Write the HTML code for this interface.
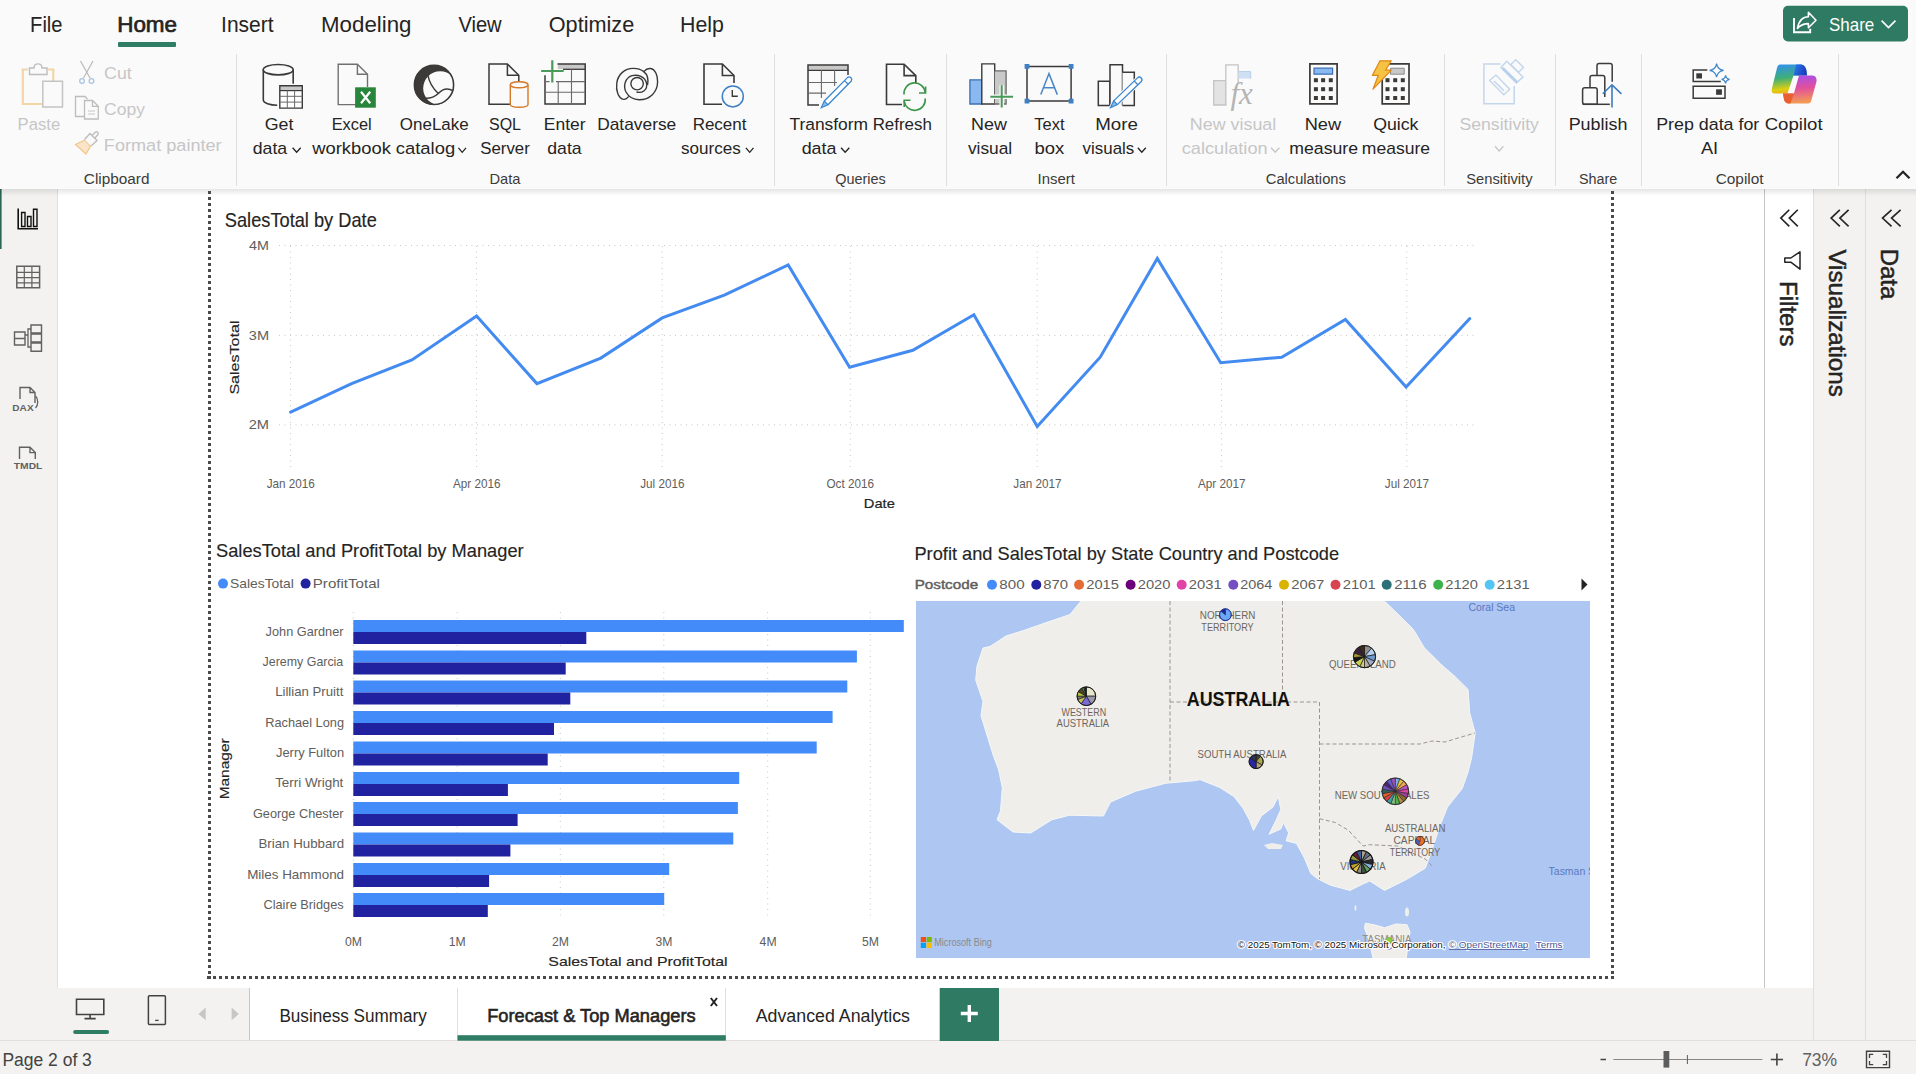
<!DOCTYPE html>
<html><head><meta charset="utf-8"><style>
html,body{margin:0;padding:0;width:1916px;height:1074px;overflow:hidden;background:#fff;}
svg{position:absolute;left:0;top:0;display:block;font-family:"Liberation Sans",sans-serif;}
</style></head><body>
<svg width="1916" height="1074" viewBox="0 0 1916 1074">
<rect x="0" y="0" width="1916" height="189" fill="#fafafa" />
<rect x="57" y="189" width="1708" height="799" fill="#ffffff" />
<rect x="0" y="189" width="57" height="852" fill="#f3f2f1" />
<line x1="57.5" y1="189" x2="57.5" y2="1041" stroke="#e1dfdd" stroke-width="1" />
<rect x="0" y="189" width="1.6" height="60" fill="#2a6655" />
<rect x="1765" y="189" width="48" height="799" fill="#ffffff" />
<line x1="1764.5" y1="189" x2="1764.5" y2="988" stroke="#c8c6c4" stroke-width="1" />
<rect x="1813" y="189" width="103" height="852" fill="#f3f2f1" />
<line x1="1813.5" y1="189" x2="1813.5" y2="1041" stroke="#e1dfdd" stroke-width="1" />
<line x1="1865.5" y1="189" x2="1865.5" y2="1041" stroke="#e1dfdd" stroke-width="1" />
<rect x="57" y="988" width="1756" height="53" fill="#f3f2f1" />
<rect x="250" y="988" width="690" height="53" fill="#ffffff" />
<line x1="249.5" y1="988" x2="249.5" y2="1041" stroke="#c8c6c4" stroke-width="1" />
<line x1="457.5" y1="988" x2="457.5" y2="1041" stroke="#e1dfdd" stroke-width="1" />
<line x1="725.5" y1="988" x2="725.5" y2="1041" stroke="#e1dfdd" stroke-width="1" />
<rect x="0" y="1041" width="1916" height="33" fill="#f3f2f1" />
<line x1="0" y1="1040.5" x2="1916" y2="1040.5" stroke="#e1dfdd" stroke-width="1" />
<defs><linearGradient id="shd" x1="0" y1="0" x2="0" y2="1"><stop offset="0" stop-color="#000" stop-opacity="0.10"/><stop offset="1" stop-color="#000" stop-opacity="0"/></linearGradient></defs>
<rect x="0" y="189" width="1916" height="7" fill="url(#shd)" />
<text transform="translate(30.09,32.20) scale(0.9080,1)" font-size="22.17" fill="#252423" >File</text>
<text transform="translate(117.20,32.20) scale(1.0120,1)" font-size="22.17" fill="#252423" stroke="#252423" stroke-width="0.7" >Home</text>
<rect x="118" y="42" width="58" height="5" fill="#2e7d64" rx="1"/>
<text transform="translate(221.11,32.20) scale(0.9470,1)" font-size="22.17" fill="#252423" >Insert</text>
<text transform="translate(321.02,32.20) scale(1.0328,1)" font-size="21.59" fill="#252423" >Modeling</text>
<text transform="translate(458.40,32.20) scale(0.9327,1)" font-size="21.59" fill="#252423" >View</text>
<text transform="translate(548.72,32.20) scale(1.0043,1)" font-size="21.59" fill="#252423" >Optimize</text>
<text transform="translate(679.99,32.20) scale(0.9884,1)" font-size="21.59" fill="#252423" >Help</text>
<text transform="translate(17.57,129.60) scale(0.9579,1)" font-size="17.40" fill="#c6c6c6" >Paste</text>
<text transform="translate(104.11,78.60) scale(1.0192,1)" font-size="17.40" fill="#c6c6c6" >Cut</text>
<text transform="translate(104.12,114.50) scale(1.0061,1)" font-size="17.40" fill="#c6c6c6" >Copy</text>
<text transform="translate(103.85,150.50) scale(1.0418,1)" font-size="17.40" fill="#c6c6c6" >Format painter</text>
<text transform="translate(264.71,130.30) scale(1.0238,1)" font-size="17.40" fill="#252423" >Get</text>
<text transform="translate(252.79,154.30) scale(1.0167,1)" font-size="17.40" fill="#252423" >data</text>
<text transform="translate(331.69,130.30) scale(0.9395,1)" font-size="17.40" fill="#252423" >Excel</text>
<text transform="translate(312.20,154.30) scale(1.0568,1)" font-size="17.40" fill="#252423" >workbook</text>
<text transform="translate(399.84,130.30) scale(0.9757,1)" font-size="17.40" fill="#252423" >OneLake</text>
<text transform="translate(395.76,154.30) scale(1.0592,1)" font-size="17.40" fill="#252423" >catalog</text>
<text transform="translate(488.98,130.30) scale(0.9195,1)" font-size="17.40" fill="#252423" >SQL</text>
<text transform="translate(480.24,154.30) scale(0.9678,1)" font-size="17.40" fill="#252423" >Server</text>
<text transform="translate(543.80,130.30) scale(1.0039,1)" font-size="17.40" fill="#252423" >Enter</text>
<text transform="translate(547.29,154.30) scale(1.0137,1)" font-size="17.40" fill="#252423" >data</text>
<text transform="translate(597.21,130.30) scale(0.9976,1)" font-size="17.40" fill="#252423" >Dataverse</text>
<text transform="translate(692.64,130.30) scale(0.9778,1)" font-size="17.40" fill="#252423" >Recent</text>
<text transform="translate(681.09,154.30) scale(0.9804,1)" font-size="17.40" fill="#252423" >sources</text>
<text transform="translate(789.45,130.30) scale(1.0004,1)" font-size="17.40" fill="#252423" >Transform</text>
<text transform="translate(801.69,154.30) scale(1.0257,1)" font-size="17.40" fill="#252423" >data</text>
<text transform="translate(872.65,130.30) scale(0.9730,1)" font-size="17.40" fill="#252423" >Refresh</text>
<text transform="translate(971.07,130.30) scale(1.0300,1)" font-size="17.40" fill="#252423" >New</text>
<text transform="translate(967.91,154.30) scale(0.9968,1)" font-size="17.40" fill="#252423" >visual</text>
<text transform="translate(1034.37,130.30) scale(0.9456,1)" font-size="17.40" fill="#252423" >Text</text>
<text transform="translate(1034.40,154.30) scale(1.0633,1)" font-size="17.40" fill="#252423" >box</text>
<text transform="translate(1095.20,130.30) scale(1.0773,1)" font-size="17.40" fill="#252423" >More</text>
<text transform="translate(1082.62,154.30) scale(0.9722,1)" font-size="17.40" fill="#252423" >visuals</text>
<text transform="translate(1304.64,130.30) scale(1.0479,1)" font-size="17.40" fill="#252423" >New</text>
<text transform="translate(1289.35,154.30) scale(1.0156,1)" font-size="17.40" fill="#252423" >measure</text>
<text transform="translate(1373.20,130.30) scale(1.0189,1)" font-size="17.40" fill="#252423" >Quick</text>
<text transform="translate(1361.86,154.30) scale(1.0080,1)" font-size="17.40" fill="#252423" >measure</text>
<text transform="translate(1568.67,130.30) scale(1.0303,1)" font-size="17.40" fill="#252423" >Publish</text>
<text transform="translate(1656.17,130.30) scale(1.0261,1)" font-size="17.40" fill="#252423" >Prep data for</text>
<text transform="translate(1700.90,154.30) scale(1.0480,1)" font-size="17.40" fill="#252423" >AI</text>
<text transform="translate(1764.67,130.30) scale(1.0704,1)" font-size="17.40" fill="#252423" >Copilot</text>
<text transform="translate(1189.87,130.30) scale(1.0281,1)" font-size="17.40" fill="#c6c6c6" >New visual</text>
<text transform="translate(1181.77,154.30) scale(1.0449,1)" font-size="17.40" fill="#c6c6c6" >calculation</text>
<text transform="translate(1459.41,130.30) scale(1.0153,1)" font-size="17.40" fill="#c6c6c6" >Sensitivity</text>
<polyline points="292.6,147.8 296.65,152.3 300.7,147.8" fill="none" stroke="#252423" stroke-width="1.3"/>
<polyline points="458.4,147.8 462.2,152.3 466,147.8" fill="none" stroke="#252423" stroke-width="1.3"/>
<polyline points="745.9,147.8 749.7,152.3 753.5,147.8" fill="none" stroke="#252423" stroke-width="1.3"/>
<polyline points="841,147.8 845.15,152.3 849.3,147.8" fill="none" stroke="#252423" stroke-width="1.3"/>
<polyline points="1137.8,147.8 1141.8,152.3 1145.8,147.8" fill="none" stroke="#252423" stroke-width="1.3"/>
<polyline points="1271,147.8 1275.2,152.3 1279.4,147.8" fill="none" stroke="#c6c6c6" stroke-width="1.3"/>
<polyline points="1495,146.3 1499.2,151.0 1503.4,146.3" fill="none" stroke="#c6c6c6" stroke-width="1.3"/>
<text transform="translate(83.83,183.60) scale(1.0508,1)" font-size="14.60" fill="#3b3a39" >Clipboard</text>
<text transform="translate(489.53,183.60) scale(1.0055,1)" font-size="14.60" fill="#3b3a39" >Data</text>
<text transform="translate(835.15,183.60) scale(0.9893,1)" font-size="14.60" fill="#3b3a39" >Queries</text>
<text transform="translate(1037.56,183.60) scale(1.0224,1)" font-size="14.60" fill="#3b3a39" >Insert</text>
<text transform="translate(1265.76,183.60) scale(1.0082,1)" font-size="14.60" fill="#3b3a39" >Calculations</text>
<text transform="translate(1466.24,183.60) scale(1.0101,1)" font-size="14.60" fill="#3b3a39" >Sensitivity</text>
<text transform="translate(1579.05,183.60) scale(0.9842,1)" font-size="14.60" fill="#3b3a39" >Share</text>
<text transform="translate(1715.63,183.60) scale(1.0560,1)" font-size="14.60" fill="#3b3a39" >Copilot</text>
<line x1="236.5" y1="54" x2="236.5" y2="186" stroke="#e1dfdd" stroke-width="1" />
<line x1="774.5" y1="54" x2="774.5" y2="186" stroke="#e1dfdd" stroke-width="1" />
<line x1="946.5" y1="54" x2="946.5" y2="186" stroke="#e1dfdd" stroke-width="1" />
<line x1="1166.5" y1="54" x2="1166.5" y2="186" stroke="#e1dfdd" stroke-width="1" />
<line x1="1444.5" y1="54" x2="1444.5" y2="186" stroke="#e1dfdd" stroke-width="1" />
<line x1="1555.5" y1="54" x2="1555.5" y2="186" stroke="#e1dfdd" stroke-width="1" />
<line x1="1641.5" y1="54" x2="1641.5" y2="186" stroke="#e1dfdd" stroke-width="1" />
<line x1="1838.5" y1="54" x2="1838.5" y2="186" stroke="#e1dfdd" stroke-width="1" />
<polyline points="1896.5,178.3 1903,171.8 1909.5,178.3" fill="none" stroke="#252423" stroke-width="2.3"/>
<rect x="1783" y="5.7" width="125" height="35.7" fill="#2e7a62" rx="5"/>
<text transform="translate(1829.04,31.10) scale(0.9008,1)" font-size="18.84" fill="#ffffff" >Share</text>
<polyline points="1881.6,20.6 1888.5,27.6 1895.5,20.6" fill="none" stroke="#fff" stroke-width="1.6"/>
<path d="M28,69.5 H22.8 V104 H42" fill="none" stroke="#f2d6a6" stroke-width="2.2" />
<path d="M48,69.5 H53.3 V81" fill="none" stroke="#f2d6a6" stroke-width="2.2" />
<path d="M29.5,74.5 V68 H34 C34,62.5 42,62.5 42,68 H47 V74.5 Z" fill="#fafafa" stroke="#bdbdbd" stroke-width="1.4" />
<path d="M42.8,81.3 H62.5 V107 H42.8 Z" fill="#fafafa" stroke="#c4c4c4" stroke-width="1.5" />
<path d="M80.5,61 L90,78 M93,61 L83.5,78" fill="none" stroke="#b9b9b9" stroke-width="1.2" />
<circle cx="82" cy="81" r="2.3" fill="none" stroke="#a9c3e0" stroke-width="1.3"/><circle cx="91.5" cy="81" r="2.3" fill="none" stroke="#a9c3e0" stroke-width="1.3"/>
<path d="M87.5,99 L85,96.5 H75.5 V116.5 H84" fill="none" stroke="#bdbdbd" stroke-width="1.3" />
<path d="M84.5,100.5 H92.5 L98.3,106.3 V119 H84.5 Z M92.5,100.5 V106.3 H98.3" fill="#fafafa" stroke="#bdbdbd" stroke-width="1.3" />
<path d="M88,111 H95 M88,114 H95" fill="none" stroke="#c8c8c8" stroke-width="1" />
<path d="M75.5,144.5 L85,140 L90.5,146 L86,154 Z" fill="#fbe5c8" stroke="#f0c68e" stroke-width="1.3" />
<path d="M84.5,139.5 L90,133.5 L97,140.5 L91,146" fill="#fafafa" stroke="#bdbdbd" stroke-width="1.4" />
<path d="M91.5,136 L95.5,132 C97,131 99,133 98,134.5 L94.5,138.5" fill="none" stroke="#bdbdbd" stroke-width="1.4" />
<path d="M293.2,83.7 V69.7 M263.3,69.7 V100 C263.3,103 270,105.2 277.2,105.2" fill="none" stroke="#3b3a39" stroke-width="1.6" />
<ellipse cx="278.2" cy="69.7" rx="15" ry="5.2" fill="none" stroke="#3b3a39" stroke-width="1.6"/>
<rect x="279.1" y="85.1" width="23.9" height="23.7" fill="#ffffff" />
<rect x="279.8" y="85.8" width="22.5" height="4.8" fill="#c8c8c8" />
<path d="M279.8,85.8 H302.3 V108.1 H279.8 Z" fill="none" stroke="#3b3a39" stroke-width="1.4" />
<path d="M279.8,90.6 H302.3" fill="none" stroke="#3b3a39" stroke-width="1.2" />
<path d="M279.8,96.3 H302.3 M279.8,102.1 H302.3 M287.3,90.6 V108.1 M294.6,90.6 V108.1" fill="none" stroke="#6a6a6a" stroke-width="1.0" />
<path d="M356,104.6 H338.2 V64.2 H357.4 L367.5,74.3 V87" fill="#fafafa" stroke="#707070" stroke-width="1.4" />
<path d="M357.4,64.2 V74.3 H367.5" fill="none" stroke="#707070" stroke-width="1.4" />
<rect x="355.1" y="87.3" width="20.7" height="20.4" fill="#27863b" />
<path d="M361,91.8 L370.2,103.3 M370.2,91.8 L361,103.3" fill="none" stroke="#ffffff" stroke-width="2.2" />
<defs><clipPath id="olc"><circle cx="434" cy="84.9" r="19.6"/></clipPath></defs>
<circle cx="434" cy="84.9" r="20" fill="#3b3a39"/>
<circle cx="440.2" cy="88.3" r="17" fill="#fafafa" clip-path="url(#olc)"/>
<circle cx="434" cy="84.9" r="19.6" fill="none" stroke="#3b3a39" stroke-width="1.6"/>
<path d="M427.8,74.5 C429,82 433,88.5 438.3,93.5" fill="none" stroke="#3b3a39" stroke-width="1.5" />
<path d="M420,97.4 C428,99.5 434,97.5 438.3,93.5 C442,89.5 447.5,87.5 453.3,90.9" fill="none" stroke="#3b3a39" stroke-width="1.5" />
<path d="M510,104.2 H489 V64 H507.4 L518.8,75.3 V84" fill="#fafafa" stroke="#3b3a39" stroke-width="1.5" />
<path d="M507.4,64 V75.3 H518.8" fill="none" stroke="#3b3a39" stroke-width="1.5" />
<path d="M510.3,84.7 V104.5 C510.3,108.2 528,108.2 528,104.5 V84.7" fill="#fafafa" stroke="#d47a2a" stroke-width="1.4" />
<ellipse cx="519.15" cy="84.7" rx="8.85" ry="3" fill="#fafafa" stroke="#d47a2a" stroke-width="1.4"/>
<rect x="557.8" y="64.2" width="27.3" height="4.8" fill="#c8c8c8" />
<path d="M557.5,64 H585.2 V104 H545 V75.2" fill="none" stroke="#3b3a39" stroke-width="1.5" />
<path d="M563,69.3 H585.2" fill="none" stroke="#3b3a39" stroke-width="1.3" />
<path d="M545,81.6 H549.5 M556,81.6 H585.2 M545,92.3 H585.2 M558.2,81.6 V104 M571.5,69.3 V104" fill="none" stroke="#6a6a6a" stroke-width="1.1" />
<path d="M552.3,60.2 V82.4 M541.2,71 H563.7" fill="none" stroke="#4a9a5a" stroke-width="2.2" />
<path d="M628.9,96.1 C627,98.5 625.5,99.6 623.8,99.4 C618,98.5 615.8,90 616.8,83 C618,74 625,68.5 633,68.4 C638,68.3 641.5,69.8 643.8,71.6 C646,69 648.5,68.2 650.5,68.5 C655.5,69.3 657.8,76 657.6,82 C657.4,92 650,99.8 639,99.7 C633,99.6 628.5,96.5 626,92 C623,86 625,78 632,75.7 C638,74 645,77 646.5,83 C648,90 642,93.5 636.5,92" fill="none" stroke="#3b3a39" stroke-width="1.4" />
<circle cx="637.1" cy="83.7" r="6.2" fill="none" stroke="#3b3a39" stroke-width="1.4"/>
<path d="M643.8,71.6 C647.5,74.5 648.5,80 647.5,85" fill="none" stroke="#3b3a39" stroke-width="1.4" />
<path d="M722,104.2 H704 V64 H722.4 L734,75.5 V83" fill="#fafafa" stroke="#3b3a39" stroke-width="1.6" />
<path d="M722.4,64 V75.5 H734" fill="none" stroke="#3b3a39" stroke-width="1.6" />
<circle cx="732.8" cy="96.4" r="10.5" fill="#fafafa" stroke="#3f80c4" stroke-width="1.5"/>
<path d="M732.3,90 V96.3 H737.8" fill="none" stroke="#3b3a39" stroke-width="1.4" />
<rect x="808.2" y="65.2" width="39.6" height="4.9" fill="#c8c8c8" />
<path d="M819,105 H808 V64.9 H848 V75" fill="none" stroke="#3b3a39" stroke-width="1.5" />
<path d="M808,70.3 H848" fill="none" stroke="#3b3a39" stroke-width="1.3" />
<path d="M808,82.5 H837 M808,93.1 H826 M821.4,70.3 V98 M834.6,70.3 V86" fill="none" stroke="#6a6a6a" stroke-width="1.1" />
<polygon points="821.2,107.8 828.0,104.7 851.3,81.0 847.7,77.4 824.3,101.0" fill="#ffffff" stroke="#fafafa" stroke-width="3"/>
<polygon points="821.2,107.8 828.0,104.7 824.3,101.0" fill="#8bbcf0" stroke="#3a87d0" stroke-width="1.2"/>
<path d="M828.0,104.7 L851.3,81.0 A2.6,2.6 0 0 0 847.7,77.4 L824.3,101.0 M848.2,84.2 L844.5,80.6" fill="none" stroke="#3a87d0" stroke-width="1.3"/>
<path d="M902,104.5 H886.5 V64.2 H904.1 L915.8,75.6 V82.8" fill="#fafafa" stroke="#3b3a39" stroke-width="1.6" />
<path d="M904.1,64.2 V75.6 H915.8" fill="none" stroke="#3b3a39" stroke-width="1.6" />
<path d="M904,94.5 A10.5,10.5 0 0 1 925.2,92.5 M925.2,98.5 A10.5,10.5 0 0 1 904.2,101" fill="none" stroke="#3b9548" stroke-width="1.6" />
<path d="M919,93 H925.6 V86.5 M910.5,100.3 H904.2 V107" fill="none" stroke="#3b9548" stroke-width="1.6" />
<path d="M969.9,79.8 H981.8 V104 H969.9 Z" fill="#8ab8f0" stroke="#3a6fb5" stroke-width="1.3" />
<path d="M981.8,104 V63.9 H994.7 V104 Z" fill="#fafafa" stroke="#3b3a39" stroke-width="1.4" />
<path d="M994.7,70.9 H1006.1 V104 H994.7" fill="#c8c8c8" stroke="#6a6a6a" stroke-width="1.3" />
<rect x="988" y="83" width="27" height="26" fill="#fafafa" opacity="0"/>
<path d="M1001.7,85.3 V107.6 M990.3,96.7 H1013.1" fill="none" stroke="#fafafa" stroke-width="4.5" />
<path d="M1001.7,85.3 V107.6 M990.3,96.7 H1013.1" fill="none" stroke="#4a9a5a" stroke-width="2.0" />
<path d="M1027,66.4 H1071.1 V101.1 H1027 Z" fill="none" stroke="#3b3a39" stroke-width="1.5" />
<rect x="1024.6" y="64.0" width="4.8" height="4.8" fill="#3f80c4" />
<rect x="1068.6999999999998" y="64.0" width="4.8" height="4.8" fill="#3f80c4" />
<rect x="1024.6" y="98.69999999999999" width="4.8" height="4.8" fill="#3f80c4" />
<rect x="1068.6999999999998" y="98.69999999999999" width="4.8" height="4.8" fill="#3f80c4" />
<path d="M1040.8,94.6 L1049,73.6 L1057.3,94.6 M1043.5,87.8 H1054.5" fill="none" stroke="#4a86c8" stroke-width="1.5" />
<path d="M1110,105.4 H1098.3 V81.2 H1110 Z" fill="#fafafa" stroke="#3b3a39" stroke-width="1.5" />
<path d="M1110,105.4 V64.8 H1122.5 V105.4" fill="#fafafa" stroke="#3b3a39" stroke-width="1.5" />
<path d="M1122.5,72.3 H1134.3 V105.4 H1122.5" fill="#fafafa" stroke="#3b3a39" stroke-width="1.5" />
<polygon points="1110.5,107.6 1117.3,104.6 1141.1,81.7 1137.5,77.9 1113.7,100.9" fill="#ffffff" stroke="#fafafa" stroke-width="3"/>
<polygon points="1110.5,107.6 1117.3,104.6 1113.7,100.9" fill="#8bbcf0" stroke="#3a87d0" stroke-width="1.2"/>
<path d="M1117.3,104.6 L1141.1,81.7 A2.6,2.6 0 0 0 1137.5,77.9 L1113.7,100.9 M1137.9,84.8 L1134.3,81.1" fill="none" stroke="#3a87d0" stroke-width="1.3"/>
<path d="M1213.7,80.7 H1225.8 V105 H1213.7 Z" fill="#e3e3e3" stroke="#c4c4c4" stroke-width="1.3" />
<path d="M1225.8,105 V64.8 H1238.2 V84" fill="#fafafa" stroke="#c4c4c4" stroke-width="1.3" />
<rect x="1238.5" y="71.6" width="12.2" height="7" fill="#cfe0f5" />
<path d="M1238.5,71.6 H1250.7 V78.6" fill="none" stroke="#b7cdea" stroke-width="1" />
<text x="1230.5" y="104" font-family="Liberation Serif" font-style="italic" font-size="31" fill="#b4b4b4">fx</text>
<path d="M1309.9,63.9 H1337.1 V103.8 H1309.9 Z" fill="#fafafa" stroke="#3b3a39" stroke-width="1.7" />
<path d="M1314,68.2 H1332.6 V74.2 H1314 Z" fill="#8ab8f0" stroke="#3a6fb5" stroke-width="1.2" />
<rect x="1313.9" y="78.2" width="4" height="4" fill="#3b3a39" />
<rect x="1313.9" y="87.2" width="4" height="4" fill="#3b3a39" />
<rect x="1313.9" y="96" width="4" height="4" fill="#3b3a39" />
<rect x="1321.1" y="78.2" width="4" height="4" fill="#3b3a39" />
<rect x="1321.1" y="87.2" width="4" height="4" fill="#3b3a39" />
<rect x="1321.1" y="96" width="4" height="4" fill="#3b3a39" />
<rect x="1328.8" y="78.2" width="4" height="4" fill="#3b3a39" />
<rect x="1328.8" y="87.2" width="4" height="4" fill="#3b3a39" />
<rect x="1328.8" y="96" width="4" height="4" fill="#3b3a39" />
<path d="M1382.2,63.9 H1409 V103.8 H1382.2 Z" fill="#fafafa" stroke="#3b3a39" stroke-width="1.7" />
<path d="M1390.5,68.2 H1404.2 V74.2 H1390.5 Z" fill="#c8c8c8" stroke="#8a8a8a" stroke-width="1.0" />
<rect x="1385.5" y="78.2" width="4" height="4" fill="#3b3a39" />
<rect x="1385.5" y="87.2" width="4" height="4" fill="#3b3a39" />
<rect x="1385.5" y="96" width="4" height="4" fill="#3b3a39" />
<rect x="1393.2" y="78.2" width="4" height="4" fill="#3b3a39" />
<rect x="1393.2" y="87.2" width="4" height="4" fill="#3b3a39" />
<rect x="1393.2" y="96" width="4" height="4" fill="#3b3a39" />
<rect x="1400.8" y="78.2" width="4" height="4" fill="#3b3a39" />
<rect x="1400.8" y="87.2" width="4" height="4" fill="#3b3a39" />
<rect x="1400.8" y="96" width="4" height="4" fill="#3b3a39" />
<polygon points="1380,60.8 1391.3,60.8 1385.5,70.2 1391.3,70.2 1373,89.2 1378.3,75.3 1372.4,75.3" fill="#f5c242" stroke="#e08614" stroke-width="1.2" stroke-linejoin="round"/>
<path d="M1500.5,63.9 H1483.9 V103.8 H1514.2 V86" fill="none" stroke="#c3d6ec" stroke-width="1.5" />
<polygon points="1500.9,67.5 1506.7,61.3 1523,77.1 1516.3,83" fill="#fafafa" stroke="#c3d6ec" stroke-width="1.4" stroke-linejoin="round"/>
<polygon points="1501.5,69 1503.5,67 1518.5,81.8 1516.5,83.5" fill="#b8d0ec"/>
<polygon points="1510.8,64.6 1515.8,59.8 1523.5,67.5 1518.6,72.3" fill="#fafafa" stroke="#c3d6ec" stroke-width="1.4" stroke-linejoin="round"/>
<polygon points="1489.6,80.5 1495.9,75 1509.7,89.2 1503.8,94.7" fill="#fafafa" stroke="#c3d6ec" stroke-width="1.4" stroke-linejoin="round"/>
<path d="M1494,81 L1504,90.8" fill="none" stroke="#c3d6ec" stroke-width="1.6" />
<path d="M1597.2,104.3 H1584.8 Q1582.6,104.3 1582.6,102 V90 Q1582.6,87.8 1584.8,87.8 H1595 Q1597.2,87.8 1597.2,90 Z" fill="none" stroke="#3b3a39" stroke-width="1.5" />
<path d="M1590,87.8 V77.8 Q1590,75.6 1592.2,75.6 H1602.6 Q1604.8,75.6 1604.8,77.8 V97" fill="none" stroke="#3b3a39" stroke-width="1.5" />
<path d="M1597,75.6 V65.6 Q1597,63.4 1599.2,63.4 H1610 Q1612.2,63.4 1612.2,65.6 V81.7" fill="none" stroke="#3b3a39" stroke-width="1.5" />
<path d="M1582.6,104.3 H1609.8" fill="none" stroke="#3b3a39" stroke-width="1.5" />
<path d="M1612,84.8 V107.6 M1602.8,93.8 L1612,84.8 L1621.4,93.8" fill="none" stroke="#3e7cc0" stroke-width="1.6" />
<path d="M1707.3,69.9 H1693.2 V81.5 H1720.8" fill="none" stroke="#3b3a39" stroke-width="1.5" />
<rect x="1696.3" y="73.3" width="5.7" height="5.2" fill="#3b3a39" />
<path d="M1693.2,86.2 H1725 V98.3 H1693.2 Z" fill="none" stroke="#3b3a39" stroke-width="1.5" />
<rect x="1716.1" y="89.3" width="5.8" height="5.5" fill="#3b3a39" />
<path d="M1716.6,63.6 Q1717.5,69.5 1723.6,70.3 Q1717.5,71.3 1716.6,77.2 Q1715.7,71.3 1709.6,70.3 Q1715.7,69.5 1716.6,63.6 Z" fill="none" stroke="#3f86cc" stroke-width="1.2" />
<path d="M1725.6,75.3 Q1726.1,78.8 1729.6,79.3 Q1726.1,79.8 1725.6,83.3 Q1725.1,79.8 1721.6,79.3 Q1725.1,78.8 1725.6,75.3 Z" fill="none" stroke="#3f86cc" stroke-width="1.2" />
<defs>
<linearGradient id="cpL" x1="0" y1="0" x2="0.15" y2="1"><stop offset="0" stop-color="#2f90f4"/><stop offset="0.5" stop-color="#3fae78"/><stop offset="0.88" stop-color="#dcd010"/><stop offset="1" stop-color="#e8b818"/></linearGradient>
<linearGradient id="cpR" x1="0" y1="0" x2="0.1" y2="1"><stop offset="0" stop-color="#a24ff0"/><stop offset="0.5" stop-color="#e2509c"/><stop offset="1" stop-color="#f29a55"/></linearGradient>
<linearGradient id="cpT" x1="0" y1="0" x2="1" y2="0.3"><stop offset="0" stop-color="#2a80ee"/><stop offset="1" stop-color="#1e3cc0"/></linearGradient>
</defs>
<path d="M1780,64.5 H1801 C1804,64.5 1806,67.5 1806.5,71 L1807,75.5 H1793.5 L1788,92 C1787.5,93 1787,93.5 1786,93.5 H1774.5 C1772,93.5 1771.2,91.5 1771.8,89 L1777,68 C1777.6,65.8 1778.5,64.5 1780,64.5 Z" fill="url(#cpL)"/>
<path d="M1796,64.5 H1801 C1804,64.5 1806,67.5 1806.5,71 L1807,75.5 H1793.5 Z" fill="url(#cpT)"/>
<path d="M1799,75.5 H1812.5 C1815.5,75.5 1817,78.5 1816.5,81.5 L1811,101.5 C1810.5,103 1809,103.5 1807,103.5 H1789 C1786,103.5 1784.5,101.5 1784,99.5 L1783,93.5 H1793.9 Z" fill="url(#cpR)"/>
<path d="M1783,93.5 H1793.9 L1790.5,103.5 H1789 C1786,103.5 1784.5,101.5 1784,99.5 Z" fill="#e8602e"/>
<path d="M1794,17.9 V32.2 H1810.2 V28.8" fill="none" stroke="#ffffff" stroke-width="1.9" />
<path d="M1797.4,28.4 C1799,20 1803,16.7 1808.4,16.7 V12.2 L1816,20.3 L1808.4,27.8 V23.6 C1803.5,23.6 1800,25.5 1797.4,28.4 Z" fill="none" stroke="#ffffff" stroke-width="1.6" stroke-linejoin="round"/>
<line x1="209.5" y1="191" x2="209.5" y2="979" stroke="#4a4a4a" stroke-width="3" stroke-dasharray="3 3"/>
<line x1="1612.5" y1="191" x2="1612.5" y2="979" stroke="#4a4a4a" stroke-width="3" stroke-dasharray="3 3"/>
<line x1="207" y1="977.5" x2="1614" y2="977.5" stroke="#4a4a4a" stroke-width="3" stroke-dasharray="3 3"/>
<rect x="208" y="976" width="3" height="3" fill="#4a4a4a" />
<text transform="translate(224.78,226.50) scale(0.9127,1)" font-size="20.00" fill="#252423" stroke="#252423" stroke-width="0.15" >SalesTotal by Date</text>
<line x1="279" y1="245.5" x2="1477" y2="245.5" stroke="#c8c8c8" stroke-width="1" stroke-dasharray="1 4.5"/>
<line x1="279" y1="335.4" x2="1477" y2="335.4" stroke="#c8c8c8" stroke-width="1" stroke-dasharray="1 4.5"/>
<line x1="279" y1="424.9" x2="1477" y2="424.9" stroke="#c8c8c8" stroke-width="1" stroke-dasharray="1 4.5"/>
<line x1="290.6" y1="246" x2="290.6" y2="470" stroke="#c8c8c8" stroke-width="1" stroke-dasharray="1 4.5"/>
<line x1="476.6" y1="246" x2="476.6" y2="470" stroke="#c8c8c8" stroke-width="1" stroke-dasharray="1 4.5"/>
<line x1="662.2" y1="246" x2="662.2" y2="470" stroke="#c8c8c8" stroke-width="1" stroke-dasharray="1 4.5"/>
<line x1="850.3" y1="246" x2="850.3" y2="470" stroke="#c8c8c8" stroke-width="1" stroke-dasharray="1 4.5"/>
<line x1="1037.2" y1="246" x2="1037.2" y2="470" stroke="#c8c8c8" stroke-width="1" stroke-dasharray="1 4.5"/>
<line x1="1221.4" y1="246" x2="1221.4" y2="470" stroke="#c8c8c8" stroke-width="1" stroke-dasharray="1 4.5"/>
<line x1="1406.8" y1="246" x2="1406.8" y2="470" stroke="#c8c8c8" stroke-width="1" stroke-dasharray="1 4.5"/>
<text transform="translate(249.11,249.80) scale(1.1364,1)" font-size="12.60" fill="#605e5c" >4M</text>
<text transform="translate(248.82,339.70) scale(1.1544,1)" font-size="12.60" fill="#605e5c" >3M</text>
<text transform="translate(248.67,429.20) scale(1.1636,1)" font-size="12.60" fill="#605e5c" >2M</text>
<text transform="translate(266.64,487.50) scale(0.9300,1)" font-size="12.60" fill="#605e5c" >Jan 2016</text>
<text transform="translate(453.05,487.50) scale(0.9300,1)" font-size="12.60" fill="#605e5c" >Apr 2016</text>
<text transform="translate(640.20,487.50) scale(0.9300,1)" font-size="12.60" fill="#605e5c" >Jul 2016</text>
<text transform="translate(826.51,487.50) scale(0.9300,1)" font-size="12.60" fill="#605e5c" >Oct 2016</text>
<text transform="translate(1013.30,487.50) scale(0.9300,1)" font-size="12.60" fill="#605e5c" >Jan 2017</text>
<text transform="translate(1197.91,487.50) scale(0.9300,1)" font-size="12.60" fill="#605e5c" >Apr 2017</text>
<text transform="translate(1384.86,487.50) scale(0.9300,1)" font-size="12.60" fill="#605e5c" >Jul 2017</text>
<text transform="translate(863.82,508.30) scale(1.0816,1)" font-size="13.60" fill="#252423" stroke="#252423" stroke-width="0.2" >Date</text>
<text transform="translate(239.00,394.62) rotate(-90) scale(1.1830,1)" font-size="13.60" fill="#252423" stroke="#252423" stroke-width="0.15">SalesTotal</text>
<polyline points="290.6,412.1 351.6,383.6 411.9,359.9 476.6,316 536.9,383.6 600.8,358.1 662.2,317.9 724.3,295.2 788.2,264.9 849.6,367.2 912.8,350.3 973.9,314.8 1037.2,426.4 1100.2,357.2 1157.3,258.4 1220.7,362.7 1281.7,357.2 1345.4,319.4 1406.1,387 1469.8,318.6" fill="none" stroke="#438bf0" stroke-width="3" stroke-linejoin="miter" stroke-linecap="round"/>
<text transform="translate(215.98,557.20) scale(1.0086,1)" font-size="18.12" fill="#252423" stroke="#252423" stroke-width="0.15" >SalesTotal and ProfitTotal by Manager</text>
<circle cx="223" cy="583.6" r="5" fill="#438bf9"/><circle cx="305.6" cy="583.6" r="5" fill="#2022a0"/>
<text transform="translate(229.98,588.40) scale(1.0196,1)" font-size="13.60" fill="#605e5c" >SalesTotal</text>
<text transform="translate(312.79,588.40) scale(1.1098,1)" font-size="13.60" fill="#605e5c" >ProfitTotal</text>
<line x1="353.3" y1="612" x2="353.3" y2="920" stroke="#c8c8c8" stroke-width="1" stroke-dasharray="1 4.5"/>
<line x1="457.2" y1="612" x2="457.2" y2="920" stroke="#c8c8c8" stroke-width="1" stroke-dasharray="1 4.5"/>
<line x1="560.3" y1="612" x2="560.3" y2="920" stroke="#c8c8c8" stroke-width="1" stroke-dasharray="1 4.5"/>
<line x1="663.8" y1="612" x2="663.8" y2="920" stroke="#c8c8c8" stroke-width="1" stroke-dasharray="1 4.5"/>
<line x1="767.7" y1="612" x2="767.7" y2="920" stroke="#c8c8c8" stroke-width="1" stroke-dasharray="1 4.5"/>
<line x1="870.3" y1="612" x2="870.3" y2="920" stroke="#c8c8c8" stroke-width="1" stroke-dasharray="1 4.5"/>
<text transform="translate(345.08,945.80) scale(0.9700,1)" font-size="12.60" fill="#605e5c" >0M</text>
<text transform="translate(448.77,945.80) scale(0.9700,1)" font-size="12.60" fill="#605e5c" >1M</text>
<text transform="translate(552.02,945.80) scale(0.9700,1)" font-size="12.60" fill="#605e5c" >2M</text>
<text transform="translate(655.58,945.80) scale(0.9700,1)" font-size="12.60" fill="#605e5c" >3M</text>
<text transform="translate(759.60,945.80) scale(0.9700,1)" font-size="12.60" fill="#605e5c" >4M</text>
<text transform="translate(862.08,945.80) scale(0.9700,1)" font-size="12.60" fill="#605e5c" >5M</text>
<text transform="translate(548.28,966.30) scale(1.1691,1)" font-size="13.60" fill="#252423" stroke="#252423" stroke-width="0.15" >SalesTotal and ProfitTotal</text>
<text transform="translate(229.00,799.34) rotate(-90) scale(1.1364,1)" font-size="13.60" fill="#252423" stroke="#252423" stroke-width="0.15">Manager</text>
<rect x="353.3" y="620.0" width="550.5" height="12" fill="#438bf9" />
<rect x="353.3" y="632.0" width="233.0" height="12" fill="#2022a0" />
<text transform="translate(265.61,635.70) scale(0.9805,1)" font-size="13.00" fill="#605e5c" >John Gardner</text>
<rect x="353.3" y="650.5" width="503.6" height="12" fill="#438bf9" />
<rect x="353.3" y="662.5" width="212.4" height="12" fill="#2022a0" />
<text transform="translate(262.61,666.05) scale(0.9549,1)" font-size="13.00" fill="#605e5c" >Jeremy Garcia</text>
<rect x="353.3" y="680.5" width="494.0" height="12" fill="#438bf9" />
<rect x="353.3" y="692.5" width="217.0" height="12" fill="#2022a0" />
<text transform="translate(275.14,696.40) scale(1.0161,1)" font-size="13.00" fill="#605e5c" >Lillian Pruitt</text>
<rect x="353.3" y="711.0" width="479.3" height="12" fill="#438bf9" />
<rect x="353.3" y="723.0" width="200.7" height="12" fill="#2022a0" />
<text transform="translate(265.18,726.75) scale(0.9844,1)" font-size="13.00" fill="#605e5c" >Rachael Long</text>
<rect x="353.3" y="741.5" width="463.4" height="12" fill="#438bf9" />
<rect x="353.3" y="753.5" width="194.4" height="12" fill="#2022a0" />
<text transform="translate(276.01,757.10) scale(0.9926,1)" font-size="13.00" fill="#605e5c" >Jerry Fulton</text>
<rect x="353.3" y="772.0" width="385.9" height="12" fill="#438bf9" />
<rect x="353.3" y="784.0" width="154.6" height="12" fill="#2022a0" />
<text transform="translate(275.13,787.45) scale(1.0312,1)" font-size="13.00" fill="#605e5c" >Terri Wright</text>
<rect x="353.3" y="802.0" width="384.6" height="12" fill="#438bf9" />
<rect x="353.3" y="814.0" width="164.3" height="12" fill="#2022a0" />
<text transform="translate(252.96,817.80) scale(0.9794,1)" font-size="13.00" fill="#605e5c" >George Chester</text>
<rect x="353.3" y="832.5" width="380.0" height="12" fill="#438bf9" />
<rect x="353.3" y="844.5" width="157.1" height="12" fill="#2022a0" />
<text transform="translate(258.44,848.15) scale(1.0232,1)" font-size="13.00" fill="#605e5c" >Brian Hubbard</text>
<rect x="353.3" y="863.0" width="315.9" height="12" fill="#438bf9" />
<rect x="353.3" y="875.0" width="135.8" height="12" fill="#2022a0" />
<text transform="translate(247.13,878.50) scale(1.0332,1)" font-size="13.00" fill="#605e5c" >Miles Hammond</text>
<rect x="353.3" y="893.0" width="310.9" height="12" fill="#438bf9" />
<rect x="353.3" y="905.0" width="134.5" height="12" fill="#2022a0" />
<text transform="translate(263.46,908.85) scale(0.9834,1)" font-size="13.00" fill="#605e5c" >Claire Bridges</text>
<text transform="translate(914.44,559.70) scale(0.9607,1)" font-size="18.99" fill="#252423" stroke="#252423" stroke-width="0.15" >Profit and SalesTotal by State Country and Postcode</text>
<text transform="translate(914.68,589.40) scale(1.1198,1)" font-size="13.60" fill="#605e5c" stroke="#605e5c" stroke-width="0.45" >Postcode</text>
<circle cx="992" cy="584.7" r="5" fill="#438bf9"/>
<text transform="translate(999.32,589.40) scale(1.1134,1)" font-size="13.60" fill="#605e5c" >800</text>
<circle cx="1036.3" cy="584.7" r="5" fill="#2022a0"/>
<text transform="translate(1043.23,589.40) scale(1.0948,1)" font-size="13.60" fill="#605e5c" >870</text>
<circle cx="1079.1" cy="584.7" r="5" fill="#e66c37"/>
<text transform="translate(1086.27,589.40) scale(1.0780,1)" font-size="13.60" fill="#605e5c" >2015</text>
<circle cx="1130.6" cy="584.7" r="5" fill="#6b007b"/>
<text transform="translate(1137.76,589.40) scale(1.0823,1)" font-size="13.60" fill="#605e5c" >2020</text>
<circle cx="1181.7" cy="584.7" r="5" fill="#e044a7"/>
<text transform="translate(1188.86,589.40) scale(1.0840,1)" font-size="13.60" fill="#605e5c" >2031</text>
<circle cx="1233.3" cy="584.7" r="5" fill="#744ec2"/>
<text transform="translate(1240.28,589.40) scale(1.0627,1)" font-size="13.60" fill="#605e5c" >2064</text>
<circle cx="1284" cy="584.7" r="5" fill="#d9b300"/>
<text transform="translate(1291.26,589.40) scale(1.0900,1)" font-size="13.60" fill="#605e5c" >2067</text>
<circle cx="1335.5" cy="584.7" r="5" fill="#d64550"/>
<text transform="translate(1342.76,589.40) scale(1.0874,1)" font-size="13.60" fill="#605e5c" >2101</text>
<circle cx="1386.7" cy="584.7" r="5" fill="#2d7078"/>
<text transform="translate(1394.25,589.40) scale(1.1065,1)" font-size="13.60" fill="#605e5c" >2116</text>
<circle cx="1438.2" cy="584.7" r="5" fill="#3db24a"/>
<text transform="translate(1445.26,589.40) scale(1.0823,1)" font-size="13.60" fill="#605e5c" >2120</text>
<circle cx="1489.7" cy="584.7" r="5" fill="#55c5f2"/>
<text transform="translate(1496.76,589.40) scale(1.0874,1)" font-size="13.60" fill="#605e5c" >2131</text>
<polygon points="1581.5,578.5 1587.5,584.5 1581.5,590.5" fill="#252423"/>
<defs><clipPath id="mapc"><rect x="916" y="601" width="674" height="357"/></clipPath></defs>
<g clip-path="url(#mapc)">
<rect x="916" y="601" width="674" height="357" fill="#aec6f2" />
<polygon points="1081,596 1384.4,596 1384.4,601 1400.7,616.8 1413.4,629.5 1424.3,647.7 1440.7,664 1455.2,676.7 1468,689.4 1469.7,713 1475.2,733 1471.5,758.4 1468,772 1462.3,788.5 1447.5,807 1440,825.6 1432.7,847.8 1425.3,868.2 1406.8,879.3 1384.5,890.4 1369.7,881 1363,883.9 1350,890.4 1330.4,885.2 1317.3,878.6 1310.8,873.4 1304.3,857.8 1296.5,843.4 1286,840.8 1288.7,833 1283.4,822.6 1280.8,829 1269,834.3 1275.6,821.3 1280.8,809.5 1278.2,796.5 1273,807 1261.3,816 1253.5,830.4 1249.5,820 1243,808.2 1233.9,796.5 1219.6,787.4 1200,779.6 1195.7,780.6 1165.5,783.3 1135.4,791.3 1110.5,802 1103.4,816 1069.7,815.2 1052,819.7 1030.7,833 1013,832 997,819.7 1000.5,810.8 1002.3,787.7 998.7,770 993,754.7 981,715.7 983,701.5 975.7,680 977,666 983,648 990,646.5 1006,636 1023.6,630.5 1045,623 1070,614.5 1081,601" fill="#efeeea" stroke="#f6f8f6" stroke-width="1" stroke-linejoin="round"/>
<polygon points="1365.3,923.2 1375,925 1384.7,927.7 1396,924 1407,924.7 1410,932 1408,945 1406,960 1373.5,960 1368.3,938 1364.6,928.4" fill="#efeeea" stroke="#f6f8f6" stroke-width="1"/>
<polygon points="1264,845 1272,843 1283,845 1281,849 1268,849" fill="#efeeea"/>
<ellipse cx="1407" cy="912" rx="2" ry="4.5" fill="#efeeea"/><ellipse cx="1355.5" cy="908" rx="1" ry="3" fill="#efeeea"/>
<path d="M1170,601 V781" stroke="#9a9590" stroke-width="1" stroke-dasharray="4 2.5" fill="none"/>
<path d="M1282.5,601 V702 M1170,702 H1319.5 V879 M1319.5,744 H1420 L1432,741 L1445,742 L1458,738 L1475,733" stroke="#9a9590" stroke-width="1" stroke-dasharray="4 2.5" fill="none"/>
<path d="M1319.5,818.7 L1335.6,822.6 L1348.6,830.4 L1363,846 L1369.5,844.7 L1397.5,846 L1425.3,859 L1432,866" stroke="#9a9590" stroke-width="1" stroke-dasharray="4 2.5" fill="none"/>
<text transform="translate(1199.81,619.36) scale(0.8790,1)" font-size="11.20" fill="#6d655e" >NORTHERN</text>
<text transform="translate(1201.32,631.36) scale(0.8145,1)" font-size="11.20" fill="#6d655e" >TERRITORY</text>
<text transform="translate(1328.96,668.36) scale(0.8666,1)" font-size="11.20" fill="#6d655e" >QUEENSLAND</text>
<text transform="translate(1061.46,715.86) scale(0.7993,1)" font-size="11.20" fill="#6d655e" >WESTERN</text>
<text transform="translate(1056.60,727.46) scale(0.8454,1)" font-size="11.20" fill="#6d655e" >AUSTRALIA</text>
<text transform="translate(1197.57,757.96) scale(0.8566,1)" font-size="11.20" fill="#6d655e" >SOUTH AUSTRALIA</text>
<text transform="translate(1334.73,799.36) scale(0.8593,1)" font-size="11.20" fill="#6d655e" >NEW SOUTH WALES</text>
<text transform="translate(1384.90,832.06) scale(0.8619,1)" font-size="11.20" fill="#6d655e" >AUSTRALIAN</text>
<text transform="translate(1393.49,843.66) scale(0.9118,1)" font-size="11.20" fill="#6d655e" >CAPITAL</text>
<text transform="translate(1389.82,855.66) scale(0.7832,1)" font-size="11.20" fill="#6d655e" >TERRITORY</text>
<text transform="translate(1340.25,869.76) scale(0.8606,1)" font-size="11.20" fill="#6d655e" >VICTORIA</text>
<text transform="translate(1362.20,943.46) scale(0.8742,1)" font-size="11.20" fill="#8d8780" >TASMANIA</text>
<text transform="translate(1186.75,706.00) scale(0.9201,1)" font-size="19.42" fill="#111111" font-weight="bold" >AUSTRALIA</text>
<text transform="translate(1468.48,610.66) scale(0.9345,1)" font-size="11.20" fill="#5a78c0" >Coral Sea</text>
<text transform="translate(1548.59,874.50) scale(0.9345,1)" font-size="11.20" fill="#5a78c0" >Tasman Sea</text>
<path d="M1086.4,696.2 L1086.40,686.90 A9.3,9.3 0 0 1 1095.70,696.20 Z" fill="#e6e6cc" stroke="#1a1a1a" stroke-width="0.7" stroke-linejoin="round"/>
<path d="M1086.4,696.2 L1095.70,696.20 A9.3,9.3 0 0 1 1091.05,704.25 Z" fill="#9a98aa" stroke="#1a1a1a" stroke-width="0.7" stroke-linejoin="round"/>
<path d="M1086.4,696.2 L1091.05,704.25 A9.3,9.3 0 0 1 1081.07,703.82 Z" fill="#7a68d8" stroke="#1a1a1a" stroke-width="0.7" stroke-linejoin="round"/>
<path d="M1086.4,696.2 L1081.07,703.82 A9.3,9.3 0 0 1 1077.66,699.38 Z" fill="#c4c060" stroke="#1a1a1a" stroke-width="0.7" stroke-linejoin="round"/>
<path d="M1086.4,696.2 L1077.66,699.38 A9.3,9.3 0 0 1 1077.10,696.20 Z" fill="#808078" stroke="#1a1a1a" stroke-width="0.7" stroke-linejoin="round"/>
<path d="M1086.4,696.2 L1077.10,696.20 A9.3,9.3 0 0 1 1078.35,691.55 Z" fill="#b4c440" stroke="#1a1a1a" stroke-width="0.7" stroke-linejoin="round"/>
<path d="M1086.4,696.2 L1078.35,691.55 A9.3,9.3 0 0 1 1081.75,688.15 Z" fill="#5a4020" stroke="#1a1a1a" stroke-width="0.7" stroke-linejoin="round"/>
<path d="M1086.4,696.2 L1081.75,688.15 A9.3,9.3 0 0 1 1083.99,687.22 Z" fill="#3aa040" stroke="#1a1a1a" stroke-width="0.7" stroke-linejoin="round"/>
<path d="M1086.4,696.2 L1083.99,687.22 A9.3,9.3 0 0 1 1086.40,686.90 Z" fill="#202020" stroke="#1a1a1a" stroke-width="0.7" stroke-linejoin="round"/>
<circle cx="1086.4" cy="696.2" r="9.3" fill="none" stroke="#1a1a1a" stroke-width="1.0"/>
<path d="M1364.5,656.6 L1364.50,645.50 A11.1,11.1 0 0 1 1371.63,648.10 Z" fill="#8e8e8e" stroke="#1a1a1a" stroke-width="0.7" stroke-linejoin="round"/>
<path d="M1364.5,656.6 L1371.63,648.10 A11.1,11.1 0 0 1 1375.43,654.67 Z" fill="#b8d0f0" stroke="#1a1a1a" stroke-width="0.7" stroke-linejoin="round"/>
<path d="M1364.5,656.6 L1375.43,654.67 A11.1,11.1 0 0 1 1374.56,661.29 Z" fill="#7098d0" stroke="#1a1a1a" stroke-width="0.7" stroke-linejoin="round"/>
<path d="M1364.5,656.6 L1374.56,661.29 A11.1,11.1 0 0 1 1370.05,666.21 Z" fill="#a0a8c0" stroke="#1a1a1a" stroke-width="0.7" stroke-linejoin="round"/>
<path d="M1364.5,656.6 L1370.05,666.21 A11.1,11.1 0 0 1 1364.50,667.70 Z" fill="#b4b0a8" stroke="#1a1a1a" stroke-width="0.7" stroke-linejoin="round"/>
<path d="M1364.5,656.6 L1364.50,667.70 A11.1,11.1 0 0 1 1359.81,666.66 Z" fill="#d8c880" stroke="#1a1a1a" stroke-width="0.7" stroke-linejoin="round"/>
<path d="M1364.5,656.6 L1359.81,666.66 A11.1,11.1 0 0 1 1354.89,662.15 Z" fill="#c8d450" stroke="#1a1a1a" stroke-width="0.7" stroke-linejoin="round"/>
<path d="M1364.5,656.6 L1354.89,662.15 A11.1,11.1 0 0 1 1353.44,657.57 Z" fill="#141414" stroke="#1a1a1a" stroke-width="0.7" stroke-linejoin="round"/>
<path d="M1364.5,656.6 L1353.44,657.57 A11.1,11.1 0 0 1 1354.07,652.80 Z" fill="#a89430" stroke="#1a1a1a" stroke-width="0.7" stroke-linejoin="round"/>
<path d="M1364.5,656.6 L1354.07,652.80 A11.1,11.1 0 0 1 1358.95,646.99 Z" fill="#3a2038" stroke="#1a1a1a" stroke-width="0.7" stroke-linejoin="round"/>
<path d="M1364.5,656.6 L1358.95,646.99 A11.1,11.1 0 0 1 1364.50,645.50 Z" fill="#3a2a18" stroke="#1a1a1a" stroke-width="0.7" stroke-linejoin="round"/>
<circle cx="1364.5" cy="656.6" r="11.1" fill="none" stroke="#1a1a1a" stroke-width="1.0"/>
<path d="M1225.4,614.7 L1225.40,608.80 A5.9,5.9 0 1 1 1220.88,610.91 Z" fill="#6aa8f5" stroke="#1c2a90" stroke-width="0.6" stroke-linejoin="round"/>
<path d="M1225.4,614.7 L1220.88,610.91 A5.9,5.9 0 0 1 1225.40,608.80 Z" fill="#1c2a90" stroke="#1c2a90" stroke-width="0.6" stroke-linejoin="round"/>
<circle cx="1225.4" cy="614.7" r="5.9" fill="none" stroke="#1c2a90" stroke-width="0.8999999999999999"/>
<path d="M1256.1,761.6 L1256.10,754.60 A7.0,7.0 0 0 1 1260.60,756.24 Z" fill="#404040" stroke="#1a1a1a" stroke-width="0.7" stroke-linejoin="round"/>
<path d="M1256.1,761.6 L1260.60,756.24 A7.0,7.0 0 0 1 1262.16,765.10 Z" fill="#a8a850" stroke="#1a1a1a" stroke-width="0.7" stroke-linejoin="round"/>
<path d="M1256.1,761.6 L1262.16,765.10 A7.0,7.0 0 0 1 1256.10,768.60 Z" fill="#b4a070" stroke="#1a1a1a" stroke-width="0.7" stroke-linejoin="round"/>
<path d="M1256.1,761.6 L1256.10,768.60 A7.0,7.0 0 0 1 1250.04,758.10 Z" fill="#2828a0" stroke="#1a1a1a" stroke-width="0.7" stroke-linejoin="round"/>
<path d="M1256.1,761.6 L1250.04,758.10 A7.0,7.0 0 0 1 1256.10,754.60 Z" fill="#303050" stroke="#1a1a1a" stroke-width="0.7" stroke-linejoin="round"/>
<circle cx="1256.1" cy="761.6" r="7.0" fill="none" stroke="#1a1a1a" stroke-width="1.0"/>
<path d="M1395.3,791.3 L1395.30,778.00 A13.3,13.3 0 0 1 1399.85,778.80 Z" fill="#7ab0e8" stroke="#2a2a2a" stroke-width="0.6" stroke-linejoin="round"/>
<path d="M1395.3,791.3 L1399.85,778.80 A13.3,13.3 0 0 1 1403.85,781.11 Z" fill="#e8c040" stroke="#2a2a2a" stroke-width="0.6" stroke-linejoin="round"/>
<path d="M1395.3,791.3 L1403.85,781.11 A13.3,13.3 0 0 1 1406.82,784.65 Z" fill="#f0a848" stroke="#2a2a2a" stroke-width="0.6" stroke-linejoin="round"/>
<path d="M1395.3,791.3 L1406.82,784.65 A13.3,13.3 0 0 1 1408.40,788.99 Z" fill="#c050c0" stroke="#2a2a2a" stroke-width="0.6" stroke-linejoin="round"/>
<path d="M1395.3,791.3 L1408.40,788.99 A13.3,13.3 0 0 1 1408.40,793.61 Z" fill="#e044a7" stroke="#2a2a2a" stroke-width="0.6" stroke-linejoin="round"/>
<path d="M1395.3,791.3 L1408.40,793.61 A13.3,13.3 0 0 1 1406.82,797.95 Z" fill="#a0409a" stroke="#2a2a2a" stroke-width="0.6" stroke-linejoin="round"/>
<path d="M1395.3,791.3 L1406.82,797.95 A13.3,13.3 0 0 1 1403.85,801.49 Z" fill="#8a6a30" stroke="#2a2a2a" stroke-width="0.6" stroke-linejoin="round"/>
<path d="M1395.3,791.3 L1403.85,801.49 A13.3,13.3 0 0 1 1399.85,803.80 Z" fill="#b09040" stroke="#2a2a2a" stroke-width="0.6" stroke-linejoin="round"/>
<path d="M1395.3,791.3 L1399.85,803.80 A13.3,13.3 0 0 1 1395.30,804.60 Z" fill="#50b050" stroke="#2a2a2a" stroke-width="0.6" stroke-linejoin="round"/>
<path d="M1395.3,791.3 L1395.30,804.60 A13.3,13.3 0 0 1 1390.75,803.80 Z" fill="#80c080" stroke="#2a2a2a" stroke-width="0.6" stroke-linejoin="round"/>
<path d="M1395.3,791.3 L1390.75,803.80 A13.3,13.3 0 0 1 1386.75,801.49 Z" fill="#40a0a0" stroke="#2a2a2a" stroke-width="0.6" stroke-linejoin="round"/>
<path d="M1395.3,791.3 L1386.75,801.49 A13.3,13.3 0 0 1 1383.78,797.95 Z" fill="#e04040" stroke="#2a2a2a" stroke-width="0.6" stroke-linejoin="round"/>
<path d="M1395.3,791.3 L1383.78,797.95 A13.3,13.3 0 0 1 1382.20,793.61 Z" fill="#e06030" stroke="#2a2a2a" stroke-width="0.6" stroke-linejoin="round"/>
<path d="M1395.3,791.3 L1382.20,793.61 A13.3,13.3 0 0 1 1382.20,788.99 Z" fill="#306060" stroke="#2a2a2a" stroke-width="0.6" stroke-linejoin="round"/>
<path d="M1395.3,791.3 L1382.20,788.99 A13.3,13.3 0 0 1 1383.78,784.65 Z" fill="#7050c0" stroke="#2a2a2a" stroke-width="0.6" stroke-linejoin="round"/>
<path d="M1395.3,791.3 L1383.78,784.65 A13.3,13.3 0 0 1 1386.75,781.11 Z" fill="#502080" stroke="#2a2a2a" stroke-width="0.6" stroke-linejoin="round"/>
<path d="M1395.3,791.3 L1386.75,781.11 A13.3,13.3 0 0 1 1390.75,778.80 Z" fill="#6060d0" stroke="#2a2a2a" stroke-width="0.6" stroke-linejoin="round"/>
<path d="M1395.3,791.3 L1390.75,778.80 A13.3,13.3 0 0 1 1395.30,778.00 Z" fill="#a050c0" stroke="#2a2a2a" stroke-width="0.6" stroke-linejoin="round"/>
<circle cx="1395.3" cy="791.3" r="13.3" fill="none" stroke="#2a2a2a" stroke-width="0.8999999999999999"/>
<path d="M1361.5,862.0 L1361.50,850.50 A11.5,11.5 0 0 1 1366.49,851.64 Z" fill="#a8a088" stroke="#141414" stroke-width="0.8" stroke-linejoin="round"/>
<path d="M1361.5,862.0 L1366.49,851.64 A11.5,11.5 0 0 1 1370.49,854.83 Z" fill="#607080" stroke="#141414" stroke-width="0.8" stroke-linejoin="round"/>
<path d="M1361.5,862.0 L1370.49,854.83 A11.5,11.5 0 0 1 1372.71,859.44 Z" fill="#9a9a9a" stroke="#141414" stroke-width="0.8" stroke-linejoin="round"/>
<path d="M1361.5,862.0 L1372.71,859.44 A11.5,11.5 0 0 1 1372.71,864.56 Z" fill="#2a2a2a" stroke="#141414" stroke-width="0.8" stroke-linejoin="round"/>
<path d="M1361.5,862.0 L1372.71,864.56 A11.5,11.5 0 0 1 1370.49,869.17 Z" fill="#8ab0e0" stroke="#141414" stroke-width="0.8" stroke-linejoin="round"/>
<path d="M1361.5,862.0 L1370.49,869.17 A11.5,11.5 0 0 1 1366.49,872.36 Z" fill="#60a060" stroke="#141414" stroke-width="0.8" stroke-linejoin="round"/>
<path d="M1361.5,862.0 L1366.49,872.36 A11.5,11.5 0 0 1 1361.50,873.50 Z" fill="#405040" stroke="#141414" stroke-width="0.8" stroke-linejoin="round"/>
<path d="M1361.5,862.0 L1361.50,873.50 A11.5,11.5 0 0 1 1356.51,872.36 Z" fill="#8a8a8a" stroke="#141414" stroke-width="0.8" stroke-linejoin="round"/>
<path d="M1361.5,862.0 L1356.51,872.36 A11.5,11.5 0 0 1 1352.51,869.17 Z" fill="#e0c040" stroke="#141414" stroke-width="0.8" stroke-linejoin="round"/>
<path d="M1361.5,862.0 L1352.51,869.17 A11.5,11.5 0 0 1 1350.29,864.56 Z" fill="#c0a030" stroke="#141414" stroke-width="0.8" stroke-linejoin="round"/>
<path d="M1361.5,862.0 L1350.29,864.56 A11.5,11.5 0 0 1 1350.29,859.44 Z" fill="#203080" stroke="#141414" stroke-width="0.8" stroke-linejoin="round"/>
<path d="M1361.5,862.0 L1350.29,859.44 A11.5,11.5 0 0 1 1352.51,854.83 Z" fill="#90a040" stroke="#141414" stroke-width="0.8" stroke-linejoin="round"/>
<path d="M1361.5,862.0 L1352.51,854.83 A11.5,11.5 0 0 1 1356.51,851.64 Z" fill="#602030" stroke="#141414" stroke-width="0.8" stroke-linejoin="round"/>
<path d="M1361.5,862.0 L1356.51,851.64 A11.5,11.5 0 0 1 1361.50,850.50 Z" fill="#4060a0" stroke="#141414" stroke-width="0.8" stroke-linejoin="round"/>
<circle cx="1361.5" cy="862.0" r="11.5" fill="none" stroke="#141414" stroke-width="1.1"/>
<path d="M1420.0,840.9 L1420.00,836.40 A4.5,4.5 0 1 1 1418.46,845.13 Z" fill="#e87030" stroke="#603020" stroke-width="0.5" stroke-linejoin="round"/>
<path d="M1420.0,840.9 L1418.46,845.13 A4.5,4.5 0 0 1 1416.10,838.65 Z" fill="#4060c0" stroke="#603020" stroke-width="0.5" stroke-linejoin="round"/>
<path d="M1420.0,840.9 L1416.10,838.65 A4.5,4.5 0 0 1 1420.00,836.40 Z" fill="#e87030" stroke="#603020" stroke-width="0.5" stroke-linejoin="round"/>
<circle cx="1420.0" cy="840.9" r="4.5" fill="none" stroke="#603020" stroke-width="0.8"/>
<circle cx="1389.2" cy="946" r="3.2" fill="none" stroke="#8a70d0" stroke-width="1"/>
<circle cx="1389.2" cy="940.4" r="3" fill="#8cd040" stroke="#60a030" stroke-width="0.6"/>
<rect x="920.8" y="937" width="5.2" height="5.2" fill="#f25022" />
<rect x="926.6" y="937" width="5.2" height="5.2" fill="#7fba00" />
<rect x="920.8" y="942.8" width="5.2" height="5.2" fill="#00a4ef" />
<rect x="926.6" y="942.8" width="5.2" height="5.2" fill="#ffb900" />
<text transform="translate(934.27,945.50) scale(0.8917,1)" font-size="10.20" fill="#8a8a8a" >Microsoft Bing</text>
<text transform="translate(1237.85,948.00) scale(1.0226,1)" font-size="9.60" fill="#111111" stroke="#ffffff" stroke-width="2.2" stroke-linejoin="round" paint-order="stroke">© 2025 TomTom, © 2025 Microsoft Corporation,</text>
<text transform="translate(1448.85,948.00) scale(1.0261,1)" font-size="9.60" fill="#4a5a9a" stroke="#ffffff" stroke-width="2.2" stroke-linejoin="round" paint-order="stroke">© OpenStreetMap</text>
<text transform="translate(1535.80,948.00) scale(1.0241,1)" font-size="9.60" fill="#4a5a9a" stroke="#ffffff" stroke-width="2.2" stroke-linejoin="round" paint-order="stroke">Terms</text>
<line x1="1449" y1="949.5" x2="1528" y2="949.5" stroke="#4a5a9a" stroke-width="0.8" />
<line x1="1536" y1="949.5" x2="1562.2" y2="949.5" stroke="#4a5a9a" stroke-width="0.8" />
</g>
<path d="M18.2,208.5 V228.8 H38" fill="none" stroke="#111111" stroke-width="1.6" />
<path d="M21.6,212.5 H25 V226.5 H21.6 Z M27.5,216.5 H31 V226.5 H27.5 Z M33.5,209.2 H37 V226.5 H33.5 Z" fill="none" stroke="#111111" stroke-width="1.4" />
<path d="M16.8,266.3 H39.6 V287.8 H16.8 Z" fill="none" stroke="#616161" stroke-width="1.5" />
<path d="M16.8,272.3 H39.6 M16.8,277.6 H39.6 M16.8,282.8 H39.6 M24.3,266.3 V287.8 M31.9,266.3 V287.8" fill="none" stroke="#616161" stroke-width="1.2" />
<path d="M31,325 H41.5 V333 H31 Z M31,334 H41.5 V342 H31 Z M31,343 H41.5 V351.3 H31 Z" fill="none" stroke="#616161" stroke-width="1.4" />
<path d="M14.5,332 H25 V338.5 H14.5 Z M14.5,338.5 H25 V345 H14.5 Z" fill="none" stroke="#616161" stroke-width="1.4" />
<path d="M25,335 H28 V329 H31 M28,335 V347 H31" fill="none" stroke="#616161" stroke-width="1.3" />
<path d="M20,399 V387.5 H30 L35,392.5 V403 M30,387.5 V392.5 H35" fill="none" stroke="#616161" stroke-width="1.4" />
<path d="M35.5,396 C38.5,399 38.5,405 35.5,408" fill="none" stroke="#616161" stroke-width="1.3" />
<text transform="translate(12.35,410.50) scale(1.1714,1)" font-size="8.60" fill="#616161" font-weight="bold" >DAX</text>
<path d="M19.5,459 V447.3 H30 L35.3,452.6 V459 M30,447.3 V452.6 H35.3" fill="none" stroke="#616161" stroke-width="1.4" />
<text transform="translate(13.80,469.30) scale(1.1989,1)" font-size="8.60" fill="#616161" font-weight="bold" >TMDL</text>
<polyline points="1789.3,209.8 1780.8,218.10000000000002 1789.3,226.4" fill="none" stroke="#252423" stroke-width="1.6"/>
<polyline points="1797.8,209.8 1797.8,209.8" fill="none" stroke="none"/>
<polyline points="1797.8,209.8 1789.3,218.10000000000002 1797.8,226.4" fill="none" stroke="#252423" stroke-width="1.6"/>
<polyline points="1839.85,209.8 1831.1,218.10000000000002 1839.85,226.4" fill="none" stroke="#252423" stroke-width="1.6"/>
<polyline points="1848.6,209.8 1848.6,209.8" fill="none" stroke="none"/>
<polyline points="1848.6,209.8 1839.85,218.10000000000002 1848.6,226.4" fill="none" stroke="#252423" stroke-width="1.6"/>
<polyline points="1891.55,209.8 1882.5,218.10000000000002 1891.55,226.4" fill="none" stroke="#252423" stroke-width="1.6"/>
<polyline points="1900.6,209.8 1900.6,209.8" fill="none" stroke="none"/>
<polyline points="1900.6,209.8 1891.55,218.10000000000002 1900.6,226.4" fill="none" stroke="#252423" stroke-width="1.6"/>
<path d="M1800,251.8 V269.2 L1790.8,262.2 H1784.8 V258 H1790.8 Z" fill="none" stroke="#252423" stroke-width="1.5" stroke-linejoin="round"/>
<text transform="translate(1780.30,281.08) rotate(90) scale(0.9808,1)" font-size="24.50" fill="#252423" stroke="#252423" stroke-width="0.5">Filters</text>
<text transform="translate(1829.00,249.38) rotate(90) scale(0.9875,1)" font-size="24.50" fill="#252423" stroke="#252423" stroke-width="0.5">Visualizations</text>
<text transform="translate(1880.80,248.68) rotate(90) scale(0.9772,1)" font-size="24.50" fill="#252423" stroke="#252423" stroke-width="0.5">Data</text>
<path d="M76.5,999.2 H103.8 V1014.5 H76.5 Z" fill="none" stroke="#424242" stroke-width="1.6" />
<path d="M90.1,1014.5 V1018.2 M84.5,1018.6 H95.7" fill="none" stroke="#424242" stroke-width="1.6" />
<rect x="73.1" y="1030" width="36" height="4" fill="#2e7d64" rx="2"/>
<path d="M149.4,995.8 H164.4 Q165.4,995.8 165.4,996.8 V1023.8 Q165.4,1024.4 164.4,1024.4 H149.4 Q148.4,1024.4 148.4,1023.8 V996.8 Q148.4,995.8 149.4,995.8 Z" fill="none" stroke="#424242" stroke-width="1.5" />
<path d="M155.2,1020.4 H158.6" fill="none" stroke="#424242" stroke-width="1.3" />
<polygon points="205.7,1007.6 198.5,1014 205.7,1020.3" fill="#c8c6c4"/>
<polygon points="231.6,1007.6 238.8,1014 231.6,1020.3" fill="#c8c6c4"/>
<text transform="translate(279.43,1022.00) scale(0.8954,1)" font-size="19.13" fill="#252423" >Business Summary</text>
<text transform="translate(487.14,1022.00) scale(0.9535,1)" font-size="19.13" fill="#252423" stroke="#252423" stroke-width="0.6" >Forecast &amp; Top Managers</text>
<rect x="457.5" y="1035.2" width="268.3" height="5.5" fill="#2e7d64" />
<path d="M710.8,998 L717,1006 M717,998 L710.8,1006" fill="none" stroke="#252423" stroke-width="2.0" />
<text transform="translate(755.70,1022.00) scale(0.9298,1)" font-size="19.13" fill="#252423" >Advanced Analytics</text>
<rect x="939.7" y="988" width="59.3" height="53" fill="#2e7a62" />
<path d="M969.3,1005 V1022 M960.8,1013.5 H977.8" fill="none" stroke="#ffffff" stroke-width="3.4" />
<text transform="translate(2.40,1066.40) scale(0.9737,1)" font-size="17.97" fill="#424242" >Page 2 of 3</text>
<line x1="1600.5" y1="1059.5" x2="1606" y2="1059.5" stroke="#424242" stroke-width="1.5" />
<line x1="1613.3" y1="1059.5" x2="1762.4" y2="1059.5" stroke="#8a8886" stroke-width="1" />
<rect x="1663.5" y="1051" width="5.8" height="16.6" fill="#5c5c5c" />
<line x1="1687.4" y1="1055" x2="1687.4" y2="1064" stroke="#5c5c5c" stroke-width="1" />
<path d="M1770.8,1059.5 H1783 M1776.9,1053.4 V1065.6" fill="none" stroke="#424242" stroke-width="1.6" />
<text transform="translate(1802.13,1066.00) scale(0.9580,1)" font-size="18.26" fill="#616161" >73%</text>
<path d="M1866.5,1051.3 H1889.5 V1067.6 H1866.5 Z" fill="none" stroke="#424242" stroke-width="1.4" />
<path d="M1869.5,1058 V1054.3 H1873.2 M1882.8,1054.3 H1886.5 V1058 M1886.5,1061 V1064.6 H1882.8 M1873.2,1064.6 H1869.5 V1061" fill="none" stroke="#424242" stroke-width="1.3" />
</svg>
</body></html>
